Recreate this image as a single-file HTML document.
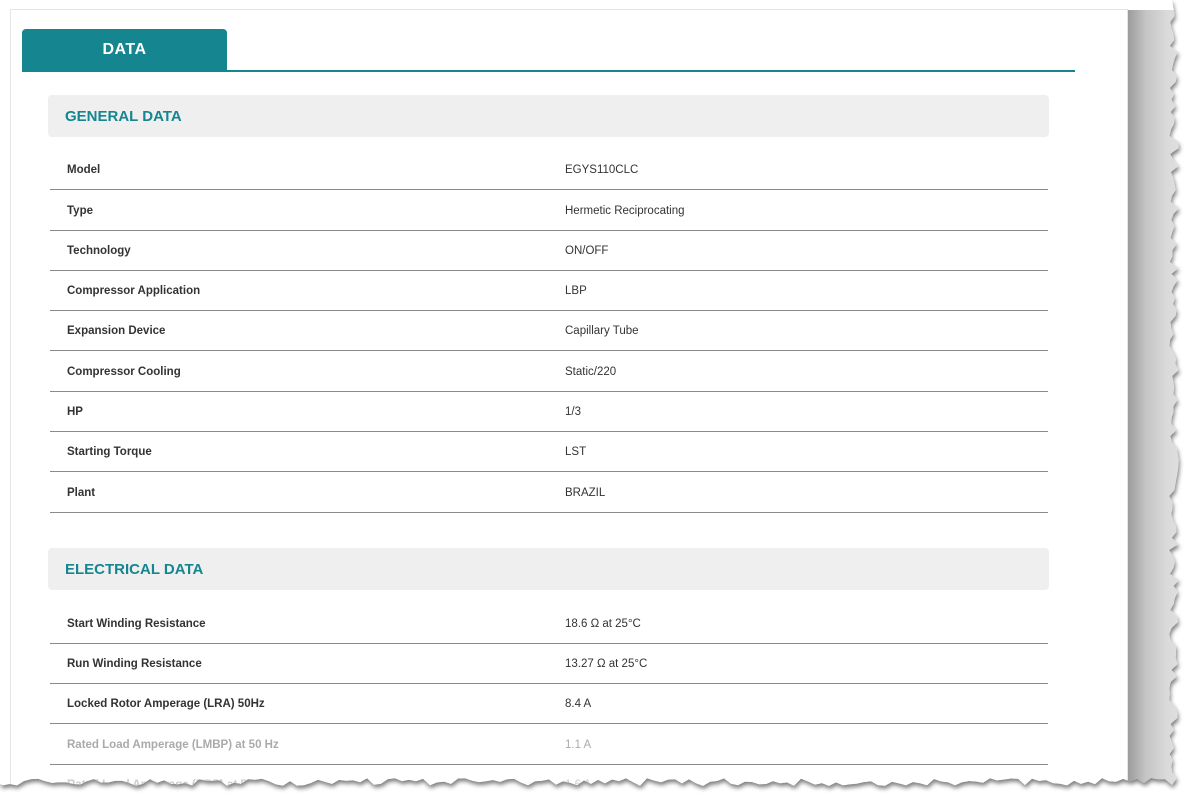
<!DOCTYPE html>
<html><head><meta charset="utf-8"><style>
html,body{margin:0;padding:0;background:#fff;width:1199px;height:808px;overflow:hidden;font-family:"Liberation Sans",sans-serif;}
#wrap{position:absolute;left:0;top:0;width:1199px;height:808px;filter:drop-shadow(1px 3px 2px rgba(0,0,0,.5));}
#paper{position:absolute;left:0;top:0;width:1199px;height:808px;background:#fff;}
#page{position:absolute;left:10px;top:9px;width:1118px;height:790px;background:#fff;border:1px solid #e4e4e4;box-sizing:border-box;}
#strip{position:absolute;left:1128px;top:10px;width:71px;height:798px;background:linear-gradient(to right,#9c9c9c,#c4c4c4 25%,#dadada 55%,#e6e6e6);}
.tab{position:absolute;left:22px;top:29px;width:205px;height:42px;background:#15868f;border-radius:4px 4px 0 0;color:#fff;font-weight:bold;font-size:16px;text-align:center;line-height:42px;letter-spacing:.5px;}
.tabline{position:absolute;left:22px;top:70px;width:1053px;height:2px;background:#15868f;}
.hdr{position:absolute;left:48px;width:1001px;height:42px;background:#efefef;border-radius:4px;color:#15868f;font-weight:bold;font-size:15px;line-height:42px;padding-left:17px;box-sizing:border-box;}
.hdr span{position:relative;top:1px;}
.row{position:absolute;left:50px;width:998px;height:40px;border-bottom:1px solid #8a8a8a;font-size:11.5px;color:#333;}
.row .l{position:absolute;left:17px;bottom:13px;font-weight:bold;}
.row .v{position:absolute;left:515px;bottom:13px;}
.fade{color:#aaa;}
</style></head><body>
<div id="wrap"><div id="paper">
<div id="page"></div>
<div id="strip"></div>
<div class="tab">DATA</div>
<div class="tabline"></div>
<div class="hdr" style="top:95px"><span>GENERAL DATA</span></div>
<div class="row" style="top:149px"><span class="l">Model</span><span class="v">EGYS110CLC</span></div>
<div class="row" style="top:190px"><span class="l">Type</span><span class="v">Hermetic Reciprocating</span></div>
<div class="row" style="top:230px"><span class="l">Technology</span><span class="v">ON/OFF</span></div>
<div class="row" style="top:270px"><span class="l">Compressor Application</span><span class="v">LBP</span></div>
<div class="row" style="top:310px"><span class="l">Expansion Device</span><span class="v">Capillary Tube</span></div>
<div class="row" style="top:351px"><span class="l">Compressor Cooling</span><span class="v">Static/220</span></div>
<div class="row" style="top:391px"><span class="l">HP</span><span class="v">1/3</span></div>
<div class="row" style="top:431px"><span class="l">Starting Torque</span><span class="v">LST</span></div>
<div class="row" style="top:472px"><span class="l">Plant</span><span class="v">BRAZIL</span></div>
<div class="hdr" style="top:548px"><span>ELECTRICAL DATA</span></div>
<div class="row" style="top:603px"><span class="l">Start Winding Resistance</span><span class="v">18.6 Ω at 25°C</span></div>
<div class="row" style="top:643px"><span class="l">Run Winding Resistance</span><span class="v">13.27 Ω at 25°C</span></div>
<div class="row" style="top:683px"><span class="l">Locked Rotor Amperage (LRA) 50Hz</span><span class="v">8.4 A</span></div>
<div class="row fade" style="top:724px"><span class="l">Rated Load Amperage (LMBP) at 50 Hz</span><span class="v">1.1 A</span></div>
<div class="row fade" style="top:764px;color:#ccc"><span class="l">Rated Load Amperage (HBP) at 50 Hz</span><span class="v">1.6 A</span></div>
</div></div>
<script>
var s=7,r=function(){s=(s*9301+49297)%233280;return s/233280;};
var pts=["0px 0px","1172px 0px"];
for(var y=10;y<780;y+=6){pts.push((1174+r()*10-5).toFixed(1)+"px "+y+"px");}
pts.push("1172px 785px");
for(var x=1165;x>0;x-=7){pts.push(x+"px "+(782+r()*8-4).toFixed(1)+"px");}
pts.push("0px 784px");
document.getElementById("paper").style.clipPath="polygon("+pts.join(",")+")";
</script>
</body></html>
